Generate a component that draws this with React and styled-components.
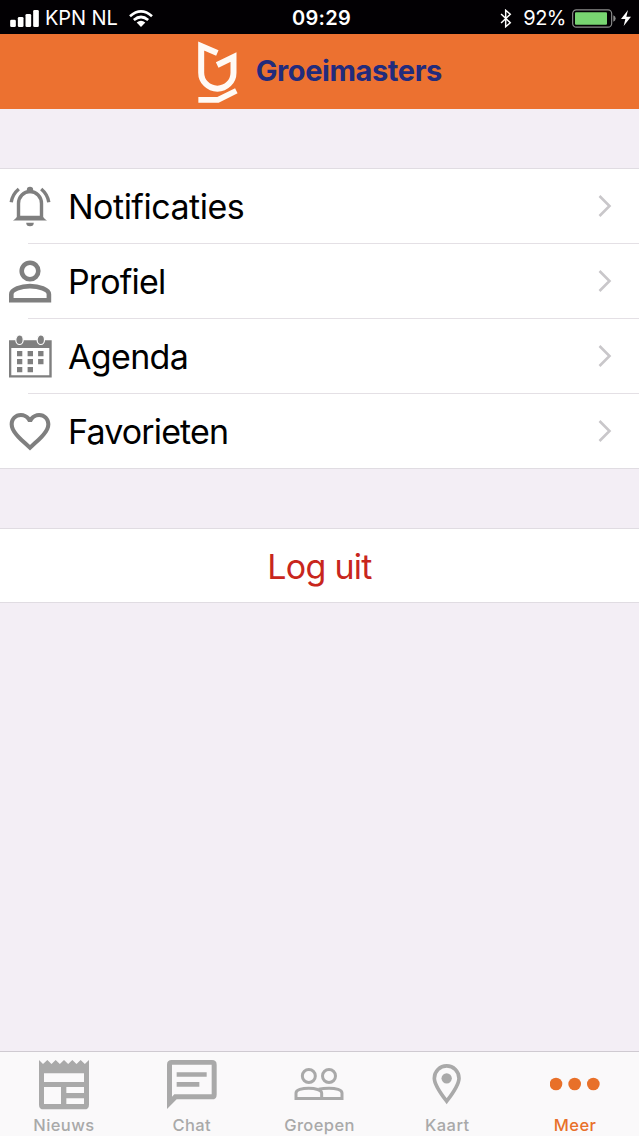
import React, { useState } from 'react';
import styled, { createGlobalStyle } from 'styled-components';

const BellIcon = () => (
  <svg viewBox="0 0 44 44" fill="none" stroke="currentColor" strokeWidth="3.4">
    <path d="M10.500 35.500V19.500a11.500 12 0 0 1 23 0v16" />
    <path d="M5 36.500c2-1.600 4-3 4.600-4.800h24.800c.6 1.800 2.600 3.200 4.600 4.800z" fill="currentColor" stroke="none" />
    <circle cx="22" cy="6" r="3.200" fill="currentColor" stroke="none" />
    <path d="M18.200 38.700h7.600a3.800 3.600 0 0 1-7.600 0z" fill="currentColor" stroke="none" />
    <path d="M10.800 5C6.500 8.600 4 12.800 3.200 18.300M33.200 5c4.300 3.600 6.800 7.800 7.600 13.300" />
  </svg>
);

const PersonIcon = () => (
  <svg viewBox="0 0 44 44" fill="none" stroke="currentColor" strokeWidth="4.6">
    <circle cx="22" cy="12" r="8.300" />
    <path d="M3.300 41.300v-6c0-4.600 9.600-8.200 18.700-8.200s18.900 3.600 18.900 8.200v6z" />
  </svg>
);

const CalendarIcon = () => (
  <svg viewBox="0 0 44 44" fill="currentColor">
    <path d="M1 6.300h42.700v37.200H1zM3.300 14v27.200h38V14z" fillRule="evenodd" />
    <g stroke="#fff" strokeWidth="1.2">
      <ellipse cx="11.500" cy="5.700" rx="3.700" ry="4.800" />
      <ellipse cx="32.800" cy="5.700" rx="3.700" ry="4.800" />
    </g>
    <path d="M9 17h5.300v5.300H9zM19.600 17H25v5.300h-5.400zM30.100 17h5.400v5.300h-5.400zM9 25h5.300v5.300H9zM19.600 25H25v5.300h-5.400zM30.100 25h5.400v5.300h-5.400zM9 33h5.300v5.300H9zM19.600 33H25v5.300h-5.400z" />
  </svg>
);

const HeartIcon = () => (
  <svg viewBox="1.2 1.03 21.6 21.6" fill="currentColor">
    <path d="M16.5 3c-1.74 0-3.41.81-4.5 2.09C10.91 3.81 9.24 3 7.5 3 4.42 3 2 5.42 2 8.5c0 3.78 3.4 6.86 8.55 11.54L12 21.35l1.45-1.32C18.6 15.36 22 12.28 22 8.5 22 5.42 19.58 3 16.5 3zm-4.4 15.55l-.1.1-.1-.1C7.14 14.24 4 11.39 4 8.5 4 6.5 5.5 5 7.5 5c1.54 0 3.04.99 3.57 2.36h1.87C13.46 5.99 14.96 5 16.5 5c2 0 3.5 1.5 3.5 3.5 0 2.89-3.14 5.74-7.9 10.05z" />
  </svg>
);

const ChevronIcon = () => (
  <svg viewBox="0 0 14 24" fill="none" stroke="currentColor" strokeWidth="2.6">
    <path d="M1.500 2l10 10-10 10" />
  </svg>
);

const NewsIcon = () => (
  <svg viewBox="0 0 150 150" fill="currentColor" fillRule="evenodd">
    <path d="M0 0l12 12L25 0l12.500 12L50 0l12.500 12L75 0l12.500 12L100 0l12.500 12L125 0l12.500 12L150 0v134q0 14-14 14H14q-14 0-14-14zM15 40v26h120V40zM15 81v51h51V81zM82 81v18h53V81zM82 115v17h53v-17z" />
  </svg>
);

const ChatIcon = () => (
  <svg viewBox="0 0 150 150" fill="currentColor" fillRule="evenodd">
    <path d="M14 0h121q14 0 14 14v90q0 14-14 14H29L0 147V14Q0 0 14 0zM15 14v96l7-7h112V14z" />
    <path d="M29 37h90v13H29zM29 66h68v14H29z" />
  </svg>
);

const GroupIcon = () => (
  <svg viewBox="0 0 150 150" fill="none" stroke="currentColor" strokeWidth="9">
    <circle cx="44.500" cy="48" r="19.500" />
    <circle cx="105" cy="48" r="19.500" />
    <path d="M6 115.500V99c0-9 18-14.500 38-14.500S83 90 83 99v16.500z" />
    <path d="M74 87.500c9-2 19-3 31-3 21 0 39 5.500 39 14.500v16.500H80" />
  </svg>
);

const PinIcon = () => (
  <svg viewBox="0 0 150 150" fill="none" stroke="currentColor" strokeWidth="11">
    <path d="M74 123.500C62 108 37 76 37 54.500a37 37 0 0 1 74 0C111 76 86 108 74 123.500z" />
    <circle cx="74" cy="55" r="15.500" fill="currentColor" stroke="none" />
  </svg>
);

const MoreIcon = () => (
  <svg viewBox="0 0 150 150" fill="currentColor">
    <circle cx="18" cy="72" r="19" />
    <circle cx="74" cy="72" r="19" />
    <circle cx="130" cy="72" r="19" />
  </svg>
);

const menuItems = [
  { name: 'Notificaties', Icon: BellIcon, spacing: -0.5 },
  { name: 'Profiel', Icon: PersonIcon, spacing: -0.85 },
  { name: 'Agenda', Icon: CalendarIcon, spacing: -0.65 },
  { name: 'Favorieten', Icon: HeartIcon, spacing: -0.85 },
];

const tabs = [
  { name: 'Nieuws', Icon: NewsIcon },
  { name: 'Chat', Icon: ChatIcon },
  { name: 'Groepen', Icon: GroupIcon },
  { name: 'Kaart', Icon: PinIcon },
  { name: 'Meer', Icon: MoreIcon },
];

const App = () => {
  const [activeTab, setActiveTab] = useState('Meer');

  return (
    <Screen>
      <GlobalStyle />
      <StatusBar>
        <StatusLeft>
          <SignalIcon viewBox="0 0 86 51">
            <rect x="0" y="29" width="17" height="22" rx="4" />
            <rect x="23" y="21" width="17" height="30" rx="4" />
            <rect x="46" y="12" width="17" height="39" rx="4" />
            <rect x="69" y="0" width="17" height="51" rx="4" />
          </SignalIcon>
          <Carrier>KPN NL</Carrier>
          <WifiIcon viewBox="0 0 72 51">
            <path d="M3 18.500Q36-10 69 18.500M14.500 30Q36 12 57.500 30" />
            <path d="M23 37.500Q36 27 49 37.500L36 51z" fill="#fff" stroke="none" />
          </WifiIcon>
        </StatusLeft>
        <Clock>09:29</Clock>
        <StatusRight>
          <BluetoothIcon viewBox="0 0 36 58">
            <path d="M3 15l28 27-14 12V4l14 12L3 43" />
          </BluetoothIcon>
          <Percent>92%</Percent>
          <BatteryIcon viewBox="0 0 132 56">
            <rect x="2" y="2" width="117" height="52" rx="11" fill="none" stroke="#8b8b8b" strokeWidth="3.5" />
            <rect x="9" y="9" width="96" height="38" rx="3" fill="#78d571" />
            <path d="M124 18q7 3 7 10t-7 10z" fill="#8b8b8b" />
          </BatteryIcon>
          <BoltIcon viewBox="0 0 30 48">
            <path d="M21 0L0 27h13L8 48l22-28H16z" />
          </BoltIcon>
        </StatusRight>
      </StatusBar>

      <Header>
        <Logo viewBox="50 30 122 190">
          <path d="M111 69L62.500 48v80a48.500 48 0 0 0 97 0V81l-49 24" strokeWidth="18" />
          <path d="M54 209.500h59l55-27" strokeWidth="17" />
        </Logo>
        <Brand>Groeimasters</Brand>
      </Header>

      <Content>
        <Section>
          {menuItems.map(({ name, Icon, spacing }) => (
            <MenuRow key={name}>
              <MenuIcon>
                <Icon />
              </MenuIcon>
              <MenuLabel $spacing={spacing}>{name}</MenuLabel>
              <Chevron>
                <ChevronIcon />
              </Chevron>
            </MenuRow>
          ))}
        </Section>
        <Section>
          <LogoutButton>Log uit</LogoutButton>
        </Section>
      </Content>

      <TabBar>
        {tabs.map(({ name, Icon }) => (
          <Tab key={name} $active={name === activeTab} onClick={() => setActiveTab(name)}>
            <Icon />
            <TabLabel>{name}</TabLabel>
          </Tab>
        ))}
      </TabBar>
    </Screen>
  );
};

export default App;

const GlobalStyle = createGlobalStyle`
  * {
    box-sizing: border-box;
  }

  body {
    margin: 0;
    font-family: Inter, "Liberation Sans", sans-serif;
  }

  button {
    margin: 0;
    padding: 0;
    border: none;
    background: none;
    font: inherit;
    color: inherit;
    cursor: pointer;
  }

  svg {
    display: block;
    flex: none;
  }
`;

const Screen = styled.div`
  display: flex;
  flex-direction: column;
  width: 639px;
  height: 1136px;
  overflow: hidden;
  background-color: #f3eef5;
`;

const StatusBar = styled.div`
  display: grid;
  grid-template-columns: 1fr auto 1fr;
  align-items: center;
  flex: none;
  height: 34px;
  padding: 1px 8px 0 10px;
  background-color: #020003;
  color: #fff;
  font-size: 20px;
  line-height: 34px;
`;

const StatusLeft = styled.div`
  display: flex;
  align-items: center;
`;

const StatusRight = styled(StatusLeft)`
  justify-content: flex-end;
`;

const SignalIcon = styled.svg`
  width: 29px;
  height: 17px;
  fill: #fff;
`;

const Carrier = styled.span`
  margin-left: 6px;
  letter-spacing: -0.1px;
`;

const WifiIcon = styled.svg`
  width: 24px;
  height: 17px;
  margin-left: 11px;
  fill: none;
  stroke: #fff;
  stroke-width: 8;
`;

const Clock = styled.span`
  padding-left: 2px;
  font-weight: 600;
  letter-spacing: 0.3px;
`;

const BluetoothIcon = styled.svg`
  width: 12px;
  height: 19px;
  fill: none;
  stroke: #fff;
  stroke-width: 4.5;
`;

const Percent = styled.span`
  margin-left: 11px;
  letter-spacing: -0.5px;
`;

const BatteryIcon = styled.svg`
  width: 44px;
  height: 19px;
  margin-left: 6px;
`;

const BoltIcon = styled.svg`
  width: 10px;
  height: 16px;
  margin-left: 5px;
  fill: #fff;
`;

const Header = styled.header`
  display: flex;
  align-items: center;
  flex: none;
  height: 75px;
  padding-left: 197px;
  background-color: #ec7130;
`;

const Logo = styled.svg`
  width: 40.7px;
  height: 63.3px;
  fill: none;
  stroke: #fffaf5;
`;

const Brand = styled.h1`
  margin: -2px 0 0 18px;
  color: #222b7c;
  font-size: 29px;
  font-weight: 700;
  letter-spacing: -0.4px;
`;

const Content = styled.main`
  display: flex;
  flex-direction: column;
  flex: 1;
  gap: 59px;
  padding-top: 59px;
`;

const Section = styled.section`
  border-top: 1px solid #e0dce2;
  border-bottom: 1px solid #e0dce2;
  background-color: #fff;
`;

const MenuRow = styled.div`
  display: flex;
  align-items: center;
  height: 75px;
  padding: 0 27px 2px 8px;
  background: linear-gradient(#e4e0e5, #e4e0e5) 28px 100% / 100% 1px no-repeat;
  cursor: pointer;

  &:last-child {
    height: 74px;
    padding-bottom: 1px;
    background: none;
  }
`;

const MenuIcon = styled.span`
  color: #7f7f7f;

  svg {
    width: 44px;
    height: 44px;
  }
`;

const MenuLabel = styled.span`
  flex: 1;
  margin-left: 16px;
  padding-top: 2px;
  color: #000;
  font-size: 34px;
  line-height: 44px;
  letter-spacing: ${(props) => props.$spacing}px;
`;

const Chevron = styled.span`
  color: #c9c7ca;

  svg {
    width: 14px;
    height: 24px;
  }
`;

const LogoutButton = styled.button`
  display: block;
  width: 100%;
  height: 73px;
  padding-top: 2px;
  color: #c8261d;
  font-size: 34px;
  letter-spacing: -0.7px;
`;

const TabBar = styled.nav`
  display: flex;
  flex: none;
  height: 85px;
  border-top: 1px solid #cfcad1;
  background-color: #faf9fa;
`;

const Tab = styled.button`
  display: flex;
  flex: 1;
  flex-direction: column;
  align-items: center;
  padding-top: 8px;
  color: ${(props) => (props.$active ? '#e87029' : '#a9a9a9')};

  svg {
    width: 50px;
    height: 50px;
  }
`;

const TabLabel = styled.span`
  margin-top: 4px;
  font-size: 16.5px;
  font-weight: 500;
  line-height: 22px;
  letter-spacing: 0.4px;
`;
